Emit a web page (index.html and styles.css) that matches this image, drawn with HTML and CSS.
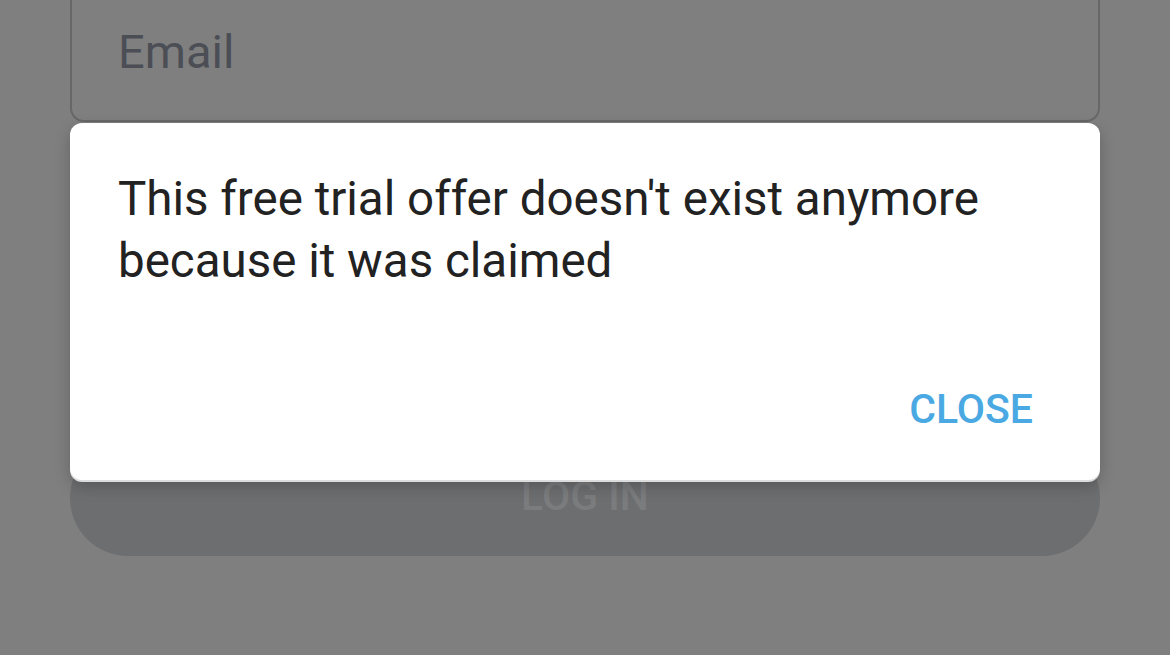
FILE: index.html
```html
<!DOCTYPE html>
<html lang="en">
<head>
    <meta charset="UTF-8">
    <meta name="viewport" content="width=device-width, initial-scale=1.0">
    <title>Log in</title>
    <link rel="stylesheet" href="styles.css">
</head>
<body>
    <form class="login">
        <div class="field field-email">
            <span class="placeholder">Email</span>
        </div>
        <div class="field field-password"></div>
        <button type="button" class="login-btn">LOG IN</button>
    </form>

    <!-- 弹窗：试用已被领取 -->
    <div class="dialog">
        <p class="dialog-msg">This free trial offer doesn't exist anymore because it was claimed</p>
        <div class="dialog-actions">
            <button type="button" class="close">CLOSE</button>
        </div>
    </div>
</body>
</html>
```

FILE: styles.css
```css
*{
    box-sizing: border-box;
}
body{
    margin: 0;
    height: 655px;
    overflow: hidden;
    background: #7f7f7f;
    font-family: Roboto, "Liberation Sans", sans-serif;
}
.login{
    display: flex;
    flex-direction: column;
    gap: 30px;
    padding: 0 70px;
    margin-top: -80px;
}
.field{
    display: flex;
    align-items: center;
    padding: 0 46px;
    border: 2px solid #676767;
    border-radius: 14px;
}
.field-email{
    height: 202px;
    padding-top: 60px;
}
.field-password{
    height: 258px;
}
.placeholder{
    font-size: 47px;
    color: #4b4e55;
}
.login-btn{
    height: 116px;
    border: none;
    border-radius: 58px;
    background: #6d6e70;
    color: #7b7c7e;
    font-family: inherit;
    font-size: 41px;
    font-weight: 500;
    padding: 0 0 4px;
}
/* 弹窗盖在表单上面 */
.dialog{
    position: absolute;
    top: 123px;
    left: 70px;
    width: 1030px;
    height: 357px;
    display: flex;
    flex-direction: column;
    background: #fff;
    border-radius: 12px;
    box-shadow: 0 2px 0 #dcdcdc, 0 6px 16px rgba(0,0,0,.22);
}
.dialog-msg{
    margin: 0;
    padding: 45px 48px 0;
    font-size: 47.5px;
    line-height: 62px;
    color: #222;
}
.dialog-actions{
    margin-top: auto;
    display: flex;
    justify-content: flex-end;
    padding: 0 49px 43px 0;
}
.close{
    border: none;
    background: none;
    padding: 8px 18px;
    font-family: inherit;
    font-size: 41px;
    line-height: 40px;
    font-weight: 500;
    color: #4aa9e2;
}
```
